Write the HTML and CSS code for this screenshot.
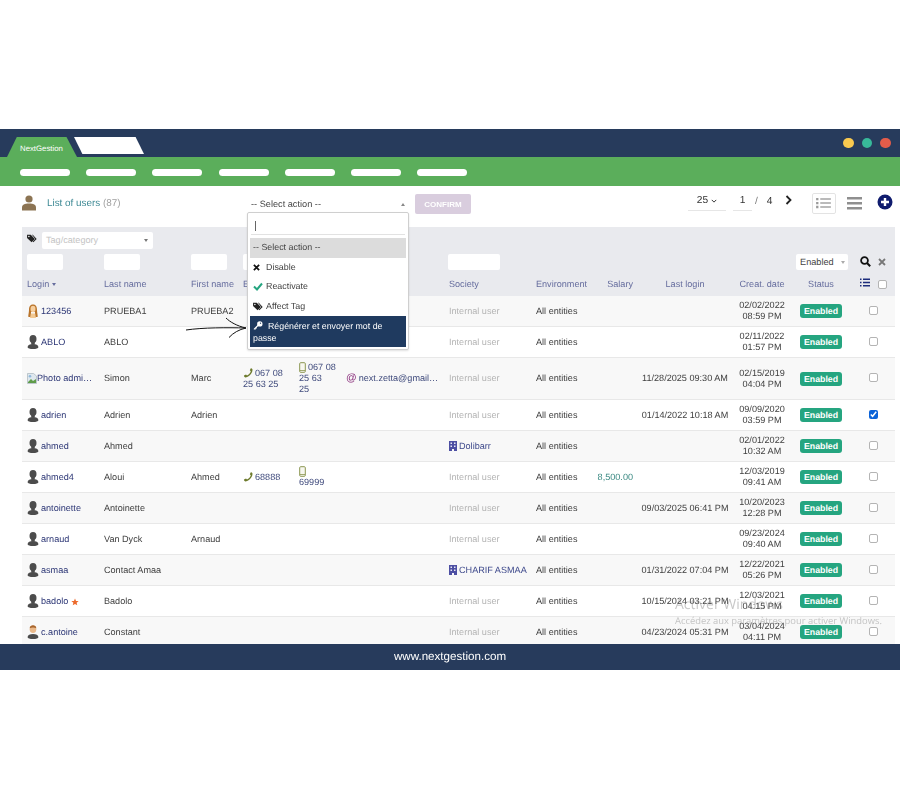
FILE: index.html
```
<!DOCTYPE html>
<html lang="en">
<head>
<meta charset="utf-8">
<title>List of users</title>
<link rel="stylesheet" href="styles.css">
</head>
<body>
<svg class="defs" width="0" height="0" aria-hidden="true">
  <symbol id="u" viewBox="0 0 12 14"><ellipse cx="6" cy="4" rx="3.500" ry="3.900" fill="#4c4c4c"/><path d="M4.200 7h3.600v2.500H4.200z" fill="#4c4c4c"/><path d="M.6 12.200C.6 10.200 3 9 6 9s5.400 1.200 5.400 3.200c0 1-2.400 1.800-5.400 1.800S.6 13.200.6 12.200z" fill="#4c4c4c"/></symbol>
  <symbol id="uf" viewBox="0 0 12 14"><path d="M6 .4C2.800.4 2 3 2 6c0 3-1 5-.6 7h2.600V8h4v5h2.600c.4-2-.6-4-.6-7 0-3-.8-5.600-4-5.600z" fill="#b9742a"/><ellipse cx="6" cy="5" rx="2.500" ry="3.200" fill="#f6cf9f"/><path d="M3.800 9.500h4.400L9 14H3z" fill="#f2c994"/></symbol>
  <symbol id="um" viewBox="0 0 12 14"><ellipse cx="6" cy="4.200" rx="3.300" ry="3.800" fill="#eab98a"/><path d="M2.700 3.200C2.700 1 4.500.3 6 .3s3.300.7 3.300 2.900C7.500 2.200 4.500 2.200 2.700 3.200z" fill="#a8662e"/><path d="M.6 12.200C.6 10.200 3 9 6 9s5.400 1.200 5.400 3.200c0 1-2.400 1.800-5.400 1.800S.6 13.200.6 12.200z" fill="#4c4c4c"/></symbol>
  <symbol id="ph" viewBox="0 0 10 10"><path d="M9.500 1.700C9.400.9 8.300.2 7.700.4L6.800 2.300l1 1C7.400 5 5.800 6.800 4 7.500L3 6.600 1 7.600c-.3.700.4 1.600 1.200 1.800C5.500 9.300 9.500 5.500 9.500 1.700z" fill="#6d7a2c"/></symbol>
  <symbol id="mo" viewBox="0 0 7 11"><rect x=".7" y=".7" width="5.600" height="9.600" rx="1" fill="#f7f7ef" stroke="#8b9650" stroke-width="1"/><path d="M1 8.500h5" stroke="#8b9650" stroke-width=".8"/></symbol>
  <symbol id="bd" viewBox="0 0 8 10"><path d="M0 0h8v10H5V8H3v2H0z" fill="#4d4fa3"/><path d="M1.500 1.500h1.500v1.500H1.500zM5 1.500h1.500v1.500H5zM1.500 4.500h1.500V6H1.500zM5 4.500h1.500V6H5z" fill="#e8e8f4"/></symbol>
  <symbol id="tg" viewBox="0 0 12 11"><path d="M0 1h4.500l5 5-4 4-5.500-5z" fill="#222"/><path d="M6 1h1l4.700 5-4 4-.8-.7L10 6z" fill="#222"/><circle cx="2.200" cy="3" r=".9" fill="#fff"/></symbol>
</svg>
<div class="app">
  <header class="topbar">
    <div class="tab tab-green">NextGestion</div>
    <div class="tab tab-white"></div>
    <div class="dots"><span class="dot d1"></span><span class="dot d2"></span><span class="dot d3"></span></div>
  </header>
  <nav class="menu">
    <span class="pill"></span><span class="pill"></span><span class="pill"></span><span class="pill"></span><span class="pill"></span><span class="pill"></span><span class="pill"></span>
  </nav>
  <section class="toolbar">
    <svg class="t-user" viewBox="0 0 14 16"><circle cx="7" cy="4" r="3.600" fill="#8c7453"/><path d="M0 15.500v-3C0 9.800 2.500 8.500 7 8.500s7 1.300 7 4v3z" fill="#8c7453"/></svg>
    <div class="title">List of users <span class="count">(87)</span></div>
    <div class="action">-- Select action --<span class="up"></span></div>
    <button class="confirm">CONFIRM</button>
    <div class="pager">
      <span class="pg pg-size">25 <svg class="chev" viewBox="0 0 8 5"><path d="M1 1l3 3 3-3" fill="none" stroke="#333" stroke-width="1.300"/></svg></span>
      <span class="pg pg-num">1</span>
      <span class="slash">/</span>
      <span class="total">4</span>
      <svg class="next" viewBox="0 0 7 10"><path d="M1.500 1l4 4-4 4" fill="none" stroke="#222" stroke-width="1.800"/></svg>
    </div>
    <div class="view view-on"><svg viewBox="0 0 16 13"><path d="M0 1h2.500v2.500H0zM0 5.300h2.500v2.500H0zM0 9.600h2.500v2.500H0z" fill="#9a9a9a"/><path d="M4.500 1.300H16v1.800H4.500zM4.500 5.600H16v1.800H4.500zM4.500 9.900H16v1.800H4.500z" fill="#a4a4a4"/></svg></div>
    <div class="view view-off"><svg viewBox="0 0 15 13"><path d="M0 0h15v2.500H0zM0 5h15v2.500H0zM0 10h15v2.500H0z" fill="#8f8f8f"/></svg></div>
    <svg class="plus" viewBox="0 0 16 16"><circle cx="8" cy="8" r="7.500" fill="#101c6e"/><path d="M4 6.800h2.800V4h2.400v2.800H12v2.400H9.200V12H6.800V9.200H4z" fill="#fff"/></svg>
  </section>

  <main class="list">
    <table class="users">
      <colgroup>
        <col class="c-login"><col class="c-last"><col class="c-first"><col class="c-phone"><col class="c-mobile"><col class="c-mail"><col class="c-soc"><col class="c-env"><col class="c-sal"><col class="c-ll"><col class="c-cd"><col class="c-st"><col class="c-ck">
      </colgroup>
      <thead>
        <tr class="f-tag">
          <th colspan="13"><div class="tagline"><svg class="i-tag"><use href="#tg"/></svg><span class="tagsel">Tag/category<span class="caret"></span></span></div></th>
        </tr>
        <tr class="f-inputs">
          <th><span class="fbox"></span></th><th><span class="fbox"></span></th><th><span class="fbox"></span></th><th><span class="fbox"></span></th><th></th><th></th><th><span class="fbox fbox-s"></span></th><th></th><th></th><th></th><th></th>
          <th class="en-cell"><span class="ensel">Enabled<span class="caret"></span></span></th>
          <th class="tools"><svg class="i-search" viewBox="0 0 11 11"><circle cx="4.500" cy="4.500" r="3.400" fill="none" stroke="#111" stroke-width="1.800"/><path d="M7 7l3.200 3.200" stroke="#111" stroke-width="2"/></svg><svg class="i-x" viewBox="0 0 8 8"><path d="M1 1l6 6M7 1l-6 6" stroke="#777" stroke-width="1.800"/></svg></th>
        </tr>
        <tr class="heads">
          <th>Login <span class="sort"></span></th><th>Last name</th><th>First name</th><th>E</th><th></th><th></th><th>Society</th><th>Environment</th><th class="r">Salary</th><th class="m">Last login</th><th class="m">Creat. date</th><th class="m">Status</th>
          <th class="hc"><svg class="i-list" viewBox="0 0 10 9"><path d="M0 .5h1.500V2H0zM0 3.700h1.500v1.500H0zM0 7h1.500v1.500H0zM3 .5h7V2H3zM3 3.700h7v1.500H3zM3 7h7v1.500H3z" fill="#1d2d7c"/></svg><input type="checkbox" class="ck"></th>
        </tr>
      </thead>
      <tbody>
        <tr><td><a class="login"><svg class="av"><use href="#uf"/></svg>123456</a></td><td>PRUEBA1</td><td>PRUEBA2</td><td></td><td></td><td></td><td class="int">Internal user</td><td class="env">All entities</td><td></td><td></td><td class="m">02/02/2022<br>08:59 PM</td><td class="m"><span class="badge">Enabled</span></td><td class="m"><input type="checkbox" class="ck"></td></tr>
        <tr><td><a class="login"><svg class="av"><use href="#u"/></svg>ABLO</a></td><td>ABLO</td><td></td><td></td><td></td><td></td><td class="int">Internal user</td><td class="env">All entities</td><td></td><td></td><td class="m">02/11/2022<br>01:57 PM</td><td class="m"><span class="badge">Enabled</span></td><td class="m"><input type="checkbox" class="ck"></td></tr>
        <tr><td><a class="login"><svg class="broken" viewBox="0 0 10 11"><path d="M.5.500h6L9.500 3v7.500h-9z" fill="#dfe8ee" stroke="#a9b4bb" stroke-width=".7"/><path d="M1 9l3-3 2 2 3-2v4H1z" fill="#5f9c4a"/><circle cx="3" cy="3.300" r="1.300" fill="#8fb7dc"/></svg>Photo admi…</a></td><td>Simon</td><td>Marc</td><td class="tel"><svg class="i-ph"><use href="#ph"/></svg>067 08<br>25 63 25</td><td class="tel"><svg class="i-mo"><use href="#mo"/></svg>067 08<br>25 63<br>25</td><td class="mailc"><div class="mail"><span class="at">@</span>next.zetta@gmail.com</div></td><td class="int">Internal user</td><td class="env">All entities</td><td></td><td class="m">11/28/2025 09:30 AM</td><td class="m">02/15/2019<br>04:04 PM</td><td class="m"><span class="badge">Enabled</span></td><td class="m"><input type="checkbox" class="ck"></td></tr>
        <tr><td><a class="login"><svg class="av"><use href="#u"/></svg>adrien</a></td><td>Adrien</td><td>Adrien</td><td></td><td></td><td></td><td class="int">Internal user</td><td class="env">All entities</td><td></td><td class="m">01/14/2022 10:18 AM</td><td class="m">09/09/2020<br>03:59 PM</td><td class="m"><span class="badge">Enabled</span></td><td class="m"><input type="checkbox" class="ck" checked></td></tr>
        <tr><td><a class="login"><svg class="av"><use href="#u"/></svg>ahmed</a></td><td>Ahmed</td><td></td><td></td><td></td><td></td><td class="soc"><svg class="i-bd"><use href="#bd"/></svg>Dolibarr</td><td class="env">All entities</td><td></td><td></td><td class="m">02/01/2022<br>10:32 AM</td><td class="m"><span class="badge">Enabled</span></td><td class="m"><input type="checkbox" class="ck"></td></tr>
        <tr><td><a class="login"><svg class="av"><use href="#u"/></svg>ahmed4</a></td><td>Aloui</td><td>Ahmed</td><td class="tel"><svg class="i-ph"><use href="#ph"/></svg>68888</td><td class="tel"><svg class="i-mo"><use href="#mo"/></svg><br>69999</td><td></td><td class="int">Internal user</td><td class="env">All entities</td><td class="sal">8,500.00</td><td></td><td class="m">12/03/2019<br>09:41 AM</td><td class="m"><span class="badge">Enabled</span></td><td class="m"><input type="checkbox" class="ck"></td></tr>
        <tr><td><a class="login"><svg class="av"><use href="#u"/></svg>antoinette</a></td><td>Antoinette</td><td></td><td></td><td></td><td></td><td class="int">Internal user</td><td class="env">All entities</td><td></td><td class="m">09/03/2025 06:41 PM</td><td class="m">10/20/2023<br>12:28 PM</td><td class="m"><span class="badge">Enabled</span></td><td class="m"><input type="checkbox" class="ck"></td></tr>
        <tr><td><a class="login"><svg class="av"><use href="#u"/></svg>arnaud</a></td><td>Van Dyck</td><td>Arnaud</td><td></td><td></td><td></td><td class="int">Internal user</td><td class="env">All entities</td><td></td><td></td><td class="m">09/23/2024<br>09:40 AM</td><td class="m"><span class="badge">Enabled</span></td><td class="m"><input type="checkbox" class="ck"></td></tr>
        <tr><td><a class="login"><svg class="av"><use href="#u"/></svg>asmaa</a></td><td>Contact Amaa</td><td></td><td></td><td></td><td></td><td class="soc"><svg class="i-bd"><use href="#bd"/></svg>CHARIF ASMAA</td><td class="env">All entities</td><td></td><td class="m">01/31/2022 07:04 PM</td><td class="m">12/22/2021<br>05:26 PM</td><td class="m"><span class="badge">Enabled</span></td><td class="m"><input type="checkbox" class="ck"></td></tr>
        <tr><td><a class="login"><svg class="av"><use href="#u"/></svg>badolo<svg class="star" viewBox="0 0 10 10"><path d="M5 .5l1.300 3.100 3.300.2-2.600 2.100.9 3.300L5 7.400 2.100 9.200 3 5.900.4 3.800l3.300-.2z" fill="#ec6a2c"/></svg></a></td><td>Badolo</td><td></td><td></td><td></td><td></td><td class="int">Internal user</td><td class="env">All entities</td><td></td><td class="m">10/15/2024 03:21 PM</td><td class="m">12/03/2021<br>04:15 PM</td><td class="m"><span class="badge">Enabled</span></td><td class="m"><input type="checkbox" class="ck"></td></tr>
        <tr><td><a class="login"><svg class="av"><use href="#um"/></svg>c.antoine</a></td><td>Constant</td><td></td><td></td><td></td><td></td><td class="int">Internal user</td><td class="env">All entities</td><td></td><td class="m">04/23/2024 05:31 PM</td><td class="m">03/04/2024<br>04:11 PM</td><td class="m"><span class="badge">Enabled</span></td><td class="m"><input type="checkbox" class="ck"></td></tr>
      </tbody>
    </table>
  </main>

  <footer class="foot">www.nextgestion.com</footer>

  <div class="dropdown">
    <div class="search"><span class="cursor"></span></div>
    <ul class="opts">
      <li class="opt opt-sel">-- Select action --</li>
      <li class="opt"><svg class="oi oi-x" viewBox="0 0 8 8"><path d="M1 1l6 6M7 1l-6 6" stroke="#111" stroke-width="2"/></svg>Disable</li>
      <li class="opt"><svg class="oi" viewBox="0 0 10 8"><path d="M1 4l3 3 5-6" fill="none" stroke="#25a580" stroke-width="2"/></svg>Reactivate</li>
      <li class="opt"><svg class="oi"><use href="#tg"/></svg>Affect Tag</li>
      <li class="opt opt-hi"><svg class="key" viewBox="0 0 11 10"><circle cx="7.500" cy="3.200" r="3" fill="#fff"/><path d="M5.500 4L.8 8.500v1h2.200V8.300h1.200V7l1.800-1.500z" fill="#fff"/><circle cx="8.300" cy="2.400" r=".7" fill="#1f3a5f"/></svg>Régénérer et envoyer mot de passe</li>
    </ul>
  </div>
  <svg class="arrow" viewBox="0 0 62 21"><path d="M1 13C18 10.500 42 10.500 61 11M41 1c4 4 11 8 20 10-7 1.500-13 5-17 9.500" fill="none" stroke="#111" stroke-width="1"/></svg>
  <div class="wm"><div class="wm1">Activer Windows</div><div class="wm2">Accédez aux paramètres pour activer Windows.</div></div>
</div>
</body>
</html>
```
FILE: styles.css
```
* { box-sizing: border-box; }
html, body { margin: 0; height: 100%; background: #fff; }
body { padding-top: 129px; font-family: "Liberation Sans", Arial, sans-serif; font-size: 9.1px; color: #404040; text-rendering: geometricPrecision; }
.defs { position: absolute; }
.app { position: relative; width: 900px; filter: blur(.45px); }

.topbar { display: flex; height: 28px; background: #273b5c; padding-left: 7px; align-items: flex-end; }
.tab { height: 20px; }
.tab-green { width: 70px; background: #5bae5b; color: #fff; font-size: 7.800px; line-height: 24px; padding-left: 13px; clip-path: polygon(14% 0, 85% 0, 100% 100%, 0 100%); }
.tab-white { width: 70px; height: 17px; margin: 0 0 3px -3px; background: #fff; clip-path: polygon(0 0, 88% 0, 100% 100%, 12% 100%); }
.dots { margin-left: auto; display: flex; gap: 8px; align-self: center; padding-right: 9.500px; }
.dot { width: 10.500px; height: 10.500px; border-radius: 50%; }
.d1 { background: #f9c94f; } .d2 { background: #38b99a; } .d3 { background: #e35c4a; }

.menu { height: 29px; background: #5bae5b; display: flex; gap: 16.200px; padding: 12px 0 0 20px; }
.pill { width: 50px; height: 7px; background: #fff; border-radius: 4px; }

.toolbar { height: 41px; display: flex; align-items: center; padding: 0 0 7px 22px; }
.t-user { flex: none; width: 14px; height: 16px; }
.title { flex: none; width: 74px; margin: 1px 0 0 11px; font-size: 9.900px; color: #3f8a95; white-space: nowrap; }
.count { color: #a0a0a0; }
.action { flex: none; position: relative; width: 154px; margin: 1px 0 0 130px; font-size: 9.200px; color: #444; white-space: nowrap; }
.up { position: absolute; right: 0; top: 4px; border: 2px solid transparent; border-bottom: 3px solid #888; border-top: 0; }
.confirm { flex: none; width: 56px; height: 20px; margin: 2px 0 0 10px; border: 0; border-radius: 2px; background: #d9cdde; color: #fff; font: bold 8px "Liberation Sans", Arial, sans-serif; padding: 0; }
.pager { display: flex; align-items: center; flex: none; margin: 0 0 4px 217px; font-size: 10.200px; color: #333; }
.pg { display: inline-flex; justify-content: center; align-items: center; gap: 3px; height: 20px; border-bottom: 1px solid #e6e6e6; }
.pg-size { width: 38px; margin-right: 7px; }
.pg-num { width: 19px; }
.slash { margin-left: 3px; color: #777; }
.total { margin-left: 9px; }
.chev { width: 6px; height: 4px; }
.next { width: 7px; height: 10px; margin: 0 0 2px 12px; }
.view { flex: none; display: flex; justify-content: center; align-items: center; height: 21px; }
.view-on { width: 24px; margin-left: 20px; border: 1px solid #e3e3e3; border-radius: 2px; }
.view-on svg { width: 15px; height: 12px; }
.view-off { width: 16px; margin-left: 11px; }
.view-off svg { width: 15px; height: 13px; }
.plus { flex: none; width: 16px; height: 16px; margin: 0 0 2px 14px; }

.list { height: 417px; padding-left: 22px; overflow: hidden; }
.users { width: 873px; table-layout: fixed; border-collapse: separate; border-spacing: 0; }
.c-login { width: 77px; } .c-last { width: 87px; } .c-first { width: 52px; } .c-phone { width: 57px; } .c-mobile { width: 46px; } .c-mail { width: 103px; } .c-soc { width: 87px; } .c-env { width: 61px; } .c-sal { width: 45px; } .c-ll { width: 96px; } .c-cd { width: 58px; } .c-st { width: 60px; } .c-ck { width: 44px; }
th { background: #e9eaee; font-weight: normal; text-align: left; padding: 0 0 0 5px; white-space: nowrap; }
.f-tag th { height: 25px; vertical-align: bottom; }
.tagline { display: flex; align-items: center; gap: 5px; padding-bottom: 3px; }
.i-tag { width: 10px; height: 9px; margin-top: -4px; }
.tagsel { position: relative; width: 111px; height: 17px; background: #fff; border-radius: 2px; color: #c4c4c4; line-height: 17px; padding-left: 4px; }
.caret { position: absolute; right: 5px; top: 7px; border: 2px solid transparent; border-top: 3px solid #777; border-bottom: 0; }
.f-inputs th { height: 19px; vertical-align: top; padding-top: 2px; }
.fbox { display: block; width: 36px; height: 16px; background: #fff; border-radius: 2px; }
.fbox-s { width: 52px; margin-left: -1px; }
.ensel { position: relative; display: block; width: 52px; height: 16px; background: #fff; border-radius: 2px; color: #444; line-height: 16px; padding-left: 4px; font-size: 9.200px; }
.ensel .caret { right: 3px; top: 7px; border-top-color: #aaa; }
.f-inputs .tools { padding: 4px 0 0 9px; }
.i-search { width: 11px; height: 11px; }
.i-x { width: 8px; height: 8px; margin: 0 0 1px 7px; }
.heads th { height: 25px; color: #666d9e; font-size: 9.100px; }
.heads .r { text-align: right; padding: 0 4px 0 0; }
.heads .m { text-align: center; padding: 0; }
.heads .hc { padding-left: 9px; }
.i-list { width: 10px; height: 9px; margin: 0 8px 1px 0; }
.sort { display: inline-block; vertical-align: 1px; border: 2.500px solid transparent; border-top: 3px solid #666d9e; border-bottom: 0; }

td { padding: 4px 0 4px 5px; line-height: 11px; border-bottom: 1px solid #e8e8e8; vertical-align: middle; white-space: nowrap; overflow: hidden; }
tbody tr:nth-child(odd) td { background: #f8f8f8; }
tbody tr:nth-child(even) td { background: #fff; }
td.m { text-align: center; padding-left: 0; }
.login { display: flex; align-items: center; color: #2c3675; }
.av { width: 12px; height: 14px; margin-right: 2px; flex: none; }
.broken { width: 10px; height: 11px; flex: none; }
.star { width: 8px; height: 8px; margin: 2px 0 0 3px; }
.int { color: #b4b4b4; }
.env { color: #3c3c3c; }
.soc { color: #3f4a8c; }
.i-bd { width: 8px; height: 10px; margin-right: 2px; vertical-align: top; }
.tel { color: #3f4a7c; }
.tel + .tel { padding-left: 4px; }
.i-ph { width: 10px; height: 10px; margin-right: 2px; vertical-align: top; }
.i-mo { width: 7px; height: 11px; margin-right: 2px; vertical-align: top; }
.mail { overflow: hidden; text-overflow: ellipsis; color: #3f4a7c; width: 94px; height: 11px; }
.at { color: #8a2f7c; font-size: 10.500px; line-height: 11px; margin-right: 2px; }
.sal { color: #3d8b84; text-align: right; padding: 4px 4px 4px 0; }
.badge { display: inline-block; width: 42px; height: 14px; border-radius: 3px; background: #25a580; color: #fff; font-weight: bold; font-size: 8.800px; line-height: 14px; text-align: center; vertical-align: top; }
.ck { width: 9px; height: 9px; margin: -2px 0 0; vertical-align: middle; accent-color: #0b63d8; }
.ck:not(:checked) { appearance: none; background: #fff; border: 1px solid #b4b4b4; border-radius: 2px; }

.foot { height: 26px; background: #273b5c; color: #fff; text-align: center; font-size: 11.600px; line-height: 26px; }

.dropdown { position: absolute; left: 247px; top: 83px; width: 162px; height: 138px; padding: 2px; background: #fff; border: 1px solid #cfcfcf; border-radius: 2px; box-shadow: 0 1px 2px rgba(0,0,0,.12); }
.search { height: 20px; margin: 0 1px 3px; border-bottom: 1px solid #e2e2e2; padding: 6px 0 0 4px; }
.cursor { display: block; width: 1px; height: 10px; background: #666; }
.opts { list-style: none; margin: 0; padding: 0; font-size: 8.900px; color: #444; }
.opt { height: 19.500px; line-height: 19.500px; padding-left: 3px; display: flex; align-items: center; }
.opt-sel { background: #dcdcdc; }
.oi { width: 10px; height: 9px; margin-right: 3px; flex: none; }
.oi-x { width: 7px; height: 7px; margin: 0 6px 0 0; }
.opt-hi { display: block; height: 31px; padding: 4px 3px; line-height: 12px; background: #1f3a5f; color: #fff; font-size: 8.800px; }
.key { width: 10px; height: 9px; margin-right: 5px; vertical-align: -1px; }
.arrow { position: absolute; left: 185px; top: 188px; width: 62px; height: 21px; }
.wm { position: absolute; left: 675px; top: 467px; color: rgba(130,130,130,.45); font-family: "Open Sans", sans-serif; white-space: nowrap; }
.wm1 { font-size: 14px; line-height: 18px; }
.wm2 { font-size: 9.400px; line-height: 13px; }
```
